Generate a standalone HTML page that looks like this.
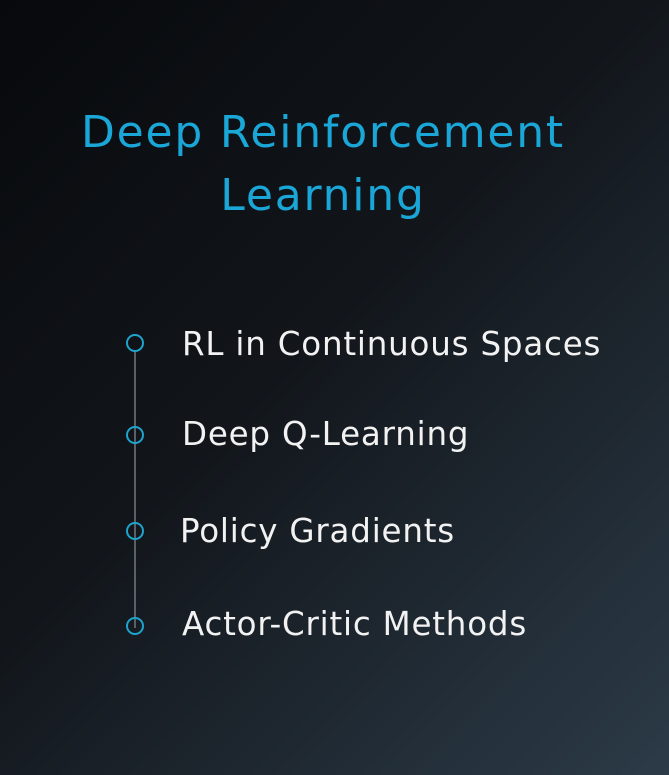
<!DOCTYPE html>
<html><head><style>
body{margin:0;width:669px;height:775px;overflow:hidden;background:linear-gradient(135deg,#07090c 0%,#12161b 45%,#2c3b48 100%);font-family:"DejaVu Sans",sans-serif;position:relative}
.t{position:absolute;left:0;width:646px;text-align:center;color:#1aa6d6;font-size:44px;line-height:63px;top:101px;letter-spacing:1.8px}
.i{position:absolute;left:182px;color:#f2f2f2;font-size:32.5px;line-height:40px;letter-spacing:0.8px}
.c{position:absolute;left:126px;width:18px;height:18px;border:2.5px solid #1ea3cc;border-radius:50%;box-sizing:border-box}
.l{position:absolute;left:134px;width:1.5px;top:350px;height:278px;background:#5a6068}
</style></head><body>
<div class="t">Deep Reinforcement<br>Learning</div>
<div class="l"></div>
<div class="c" style="top:334px"></div>
<div class="c" style="top:426px"></div>
<div class="c" style="top:522px"></div>
<div class="c" style="top:617px"></div>
<div class="i" style="top:324px">RL in Continuous Spaces</div>
<div class="i" style="top:414px">Deep Q-Learning</div>
<div class="i" style="top:511px;left:180px">Policy Gradients</div>
<div class="i" style="top:604px">Actor-Critic Methods</div>
</body></html>
